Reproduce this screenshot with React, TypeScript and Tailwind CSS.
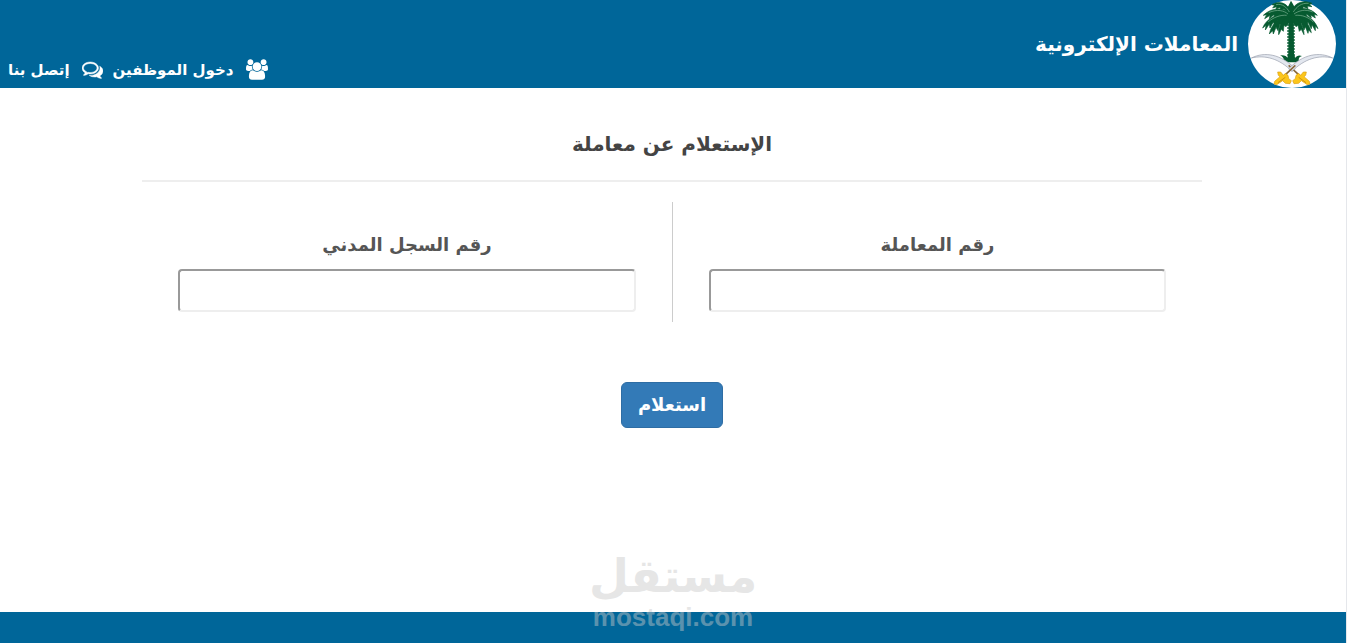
import React, { useState } from 'react';

// Tapered fronds, from the crown outwards
const FRONDS = [
  'M128 34 C116 6 92 2 72 14 L80 16 L74 24 L86 20 L84 28 L96 22 L98 30 L108 26 L128 44 Z',
  'M130 34 C142 4 170 0 192 10 L184 14 L192 20 L178 18 L180 26 L166 20 L164 28 L152 26 L130 44 Z',
  'M128 38 C104 20 68 24 46 46 L56 44 L50 56 L66 46 L64 56 L78 44 L80 52 L94 44 L128 48 Z',
  'M130 38 C156 18 190 24 208 46 L198 43 L202 54 L188 45 L190 54 L176 43 L174 52 L162 44 L130 48 Z',
  'M127 42 C94 38 56 52 44 84 L54 76 L52 90 L64 72 L66 84 L76 66 L80 76 L90 60 L96 64 L128 54 Z',
  'M131 42 C164 36 198 52 210 86 L202 78 L202 92 L192 74 L190 86 L180 66 L176 76 L166 60 L160 64 L130 54 Z',
  'M127 46 C98 48 70 70 64 102 L74 92 L76 102 L84 82 L90 92 L96 72 L104 74 L128 58 Z',
  'M131 46 C162 48 184 68 190 98 L182 90 L180 100 L172 80 L168 90 L160 70 L154 74 L130 58 Z',
  'M126 50 C104 56 90 76 92 104 L100 88 L106 94 L108 76 L114 80 L130 58 Z',
  'M132 50 C152 56 168 76 168 104 L160 88 L154 94 L150 76 L144 80 L128 58 Z',
];

function Emblem() {
  return (
    <svg viewBox="0 0 264 264" className="h-22 w-22 shrink-0" role="img" aria-label="الشعار">
      <circle cx="132" cy="132" r="132" fill="#ffffff" />

      {/* Palm tree */}
      <g fill="#065a30">
        <path d="M122 46 L137 46 L138 160 L142 184 L116 184 L121 160 Z" />
        <path d="M102 187 C112 182 106 170 96 166 C108 164 116 168 119 174 L124 158 L130 174 L137 160 L141 174 C146 168 152 164 162 168 C152 170 148 182 158 187 Z" />
        <path d="M112 58 C110 36 120 20 129 2 C140 20 150 36 146 58 L130 66 Z" />
        {FRONDS.map((d) => (
          <path key={d} d={d} stroke="#065a30" strokeWidth="2" strokeLinejoin="round" />
        ))}
      </g>
      <path d="M129 64 V172" stroke="#065a30" strokeWidth="23" strokeDasharray="4 5" />
      <path
        d="M84 14 C104 10 116 22 124 36 M182 10 C160 8 146 20 136 36 M62 38 C88 26 108 32 120 42 M194 36 C172 26 152 32 138 42 M60 66 C76 52 98 44 116 46 M196 66 C182 52 162 44 142 46"
        fill="none"
        stroke="#7fb596"
        strokeWidth="2"
      />

      {/* Swords */}
      <g id="sword">
        <path
          d="M10 174 C50 154 98 162 142 206 L132 214 C94 176 52 164 10 174 Z"
          fill="#e3e7ef"
          stroke="#979dab"
          strokeWidth="2"
        />
        <path d="M122 196 L158 230" stroke="#8a6a3c" strokeWidth="5" />
        <path
          d="M134 242 L142 236 L144 226 L152 220 L158 226 L166 216 L175 216 L173 226 L168 230 L184 244 L186 252 L178 254 L160 242 L152 250 L138 251 Z"
          fill="#fcc61b"
          stroke="#dba014"
          strokeWidth="2"
          strokeLinejoin="round"
        />
        <path d="M152 232 L174 248" stroke="#b5780f" strokeWidth="2" />
      </g>
      <use href="#sword" transform="matrix(-1 0 0 1 264 0)" />
    </svg>
  );
}

function UsersIcon() {
  return (
    <svg viewBox="0 0 1920 1792" className="h-[21px] w-[22px] shrink-0" fill="currentColor" aria-hidden="true">
      <path d="M593 896q-162 5-265 128h-134q-82 0-138-40.5t-56-118.5q0-353 124-353 6 0 43.5 21t97.5 42.5 119 21.5q67 0 133-23-5 37-5 66 0 139 81 256zm1071 637q0 120-73 189.5t-194 69.5h-874q-121 0-194-69.5t-73-189.5q0-53 3.5-103.5t14-109 26.5-108.5 43-97.5 62-81 85.5-53.5 111.5-20q10 0 43 21.5t73 48 107 48 135 21.5 135-21.5 107-48 73-48 43-21.5q61 0 111.5 20t85.5 53.5 62 81 43 97.5 26.5 108.5 14 109 3.5 103.5zm-1024-1277q0 106-75 181t-181 75-181-75-75-181 75-181 181-75 181 75 75 181zm704 384q0 159-112.5 271.5t-271.5 112.5-271.5-112.5-112.5-271.5 112.5-271.5 271.5-112.5 271.5 112.5 112.5 271.5zm576 225q0 78-56 118.5t-138 40.5h-134q-103-123-265-128 81-117 81-256 0-29-5-66 66 23 133 23 59 0 119-21.5t97.5-42.5 43.5-21q124 0 124 353zm-128-609q0 106-75 181t-181 75-181-75-75-181 75-181 181-75 181 75 75 181z" />
    </svg>
  );
}

function CommentsIcon() {
  return (
    <svg
      viewBox="0 0 1792 1792"
      className="h-[21px] w-[21px] shrink-0"
      fill="currentColor"
      stroke="currentColor"
      strokeWidth="40"
      aria-hidden="true"
    >
      <path d="M704 384q-153 0-286 52t-211.5 141-78.5 191q0 82 53 158t149 132l97 56-35 84q34-20 62-39l44-31 53 10q78 14 153 14 153 0 286-52t211.5-141 78.5-191-78.5-191-211.5-141-286-52zm0-128q191 0 353.5 68.5t256.5 186.5 94 257-94 257-256.5 186.5-353.5 68.5q-86 0-176-16-124 88-278 128-36 9-86 16h-3q-11 0-20.5-8t-11.5-21q-1-3-1-6.5t.5-6.5 2-6l2.5-5 3.5-5.5 4-5 4.5-5 4-4.5q5-6 23-25t26-29.5 22.5-29 25-38.5 20.5-44q-124-72-195-177t-71-224q0-139 94-257t256.5-186.5 353.5-68.5zm822 1169q10 24 20.5 44t25 38.5 22.5 29 26 29.5 23 25q1 1 4 4.5t4.5 5 4 5 3.5 5.5l2.5 5 2 6 .5 6.5-1 6.5q-3 14-13 22t-22 7q-50-7-86-16-154-40-278-128-90 16-176 16-271 0-472-132 58 4 88 4 161 0 309-45t264-129q125-92 192-212t67-254q0-77-23-152 129 71 204 178t75 230q0 120-71 224.5t-195 176.5z" />
    </svg>
  );
}

const FIELDS = [
  { id: 'transaction', label: 'رقم المعاملة' },
  { id: 'civil-id', label: 'رقم السجل المدني' },
];

export default function App() {
  const [values, setValues] = useState<Record<string, string>>({});

  const handleChange = (e: React.ChangeEvent<HTMLInputElement>) => {
    setValues({ ...values, [e.target.id]: e.target.value });
  };

  return (
    <div
      dir="rtl"
      className="relative flex min-h-screen flex-col border-r border-gray-200 bg-white font-['DejaVu_Sans',sans-serif] font-bold text-[#444444]"
    >
      {/* Header */}
      <header className="flex justify-between bg-[#006699] pr-2.5 text-white">
        <div className="flex items-center gap-2.5">
          <Emblem />
          <h1 className="text-xl">المعاملات الإلكترونية</h1>
        </div>
        <nav className="flex items-end gap-2.5 pb-2 pl-2 text-[15px] leading-5">
          <a href="#staff" className="flex items-center gap-3">
            <UsersIcon />
            دخول الموظفين
          </a>
          <a href="#contact" className="flex items-center gap-3">
            <CommentsIcon />
            إتصل بنا
          </a>
        </nav>
      </header>

      {/* Inquiry form */}
      <main className="mx-auto w-full max-w-[1062px] grow pt-[42px] pr-0.5">
        <h2 className="border-b-2 border-[#eeeeee] pb-[22px] text-center text-xl">الإستعلام عن معاملة</h2>
        <form onSubmit={(e) => e.preventDefault()}>
          <div className="mt-5 grid grid-cols-2 divide-x divide-[#cccccc]">
            {FIELDS.map((field) => (
              <div key={field.id} className="px-9 pt-[29px] pb-2.5 text-center">
                <label htmlFor={field.id} className="mb-2.5 block text-lg text-[#555555]">
                  {field.label}
                </label>
                <input
                  id={field.id}
                  type="text"
                  value={values[field.id] ?? ''}
                  onChange={handleChange}
                  className="block h-[43px] w-full rounded-sm border-2 border-t-[#999999] border-r-[#eeeeee] border-b-[#eeeeee] border-l-[#999999] bg-white px-3"
                />
              </div>
            ))}
          </div>
          <div className="mt-15 flex justify-center">
            <button type="submit" className="rounded-md border border-[#2e6da4] bg-[#337ab7] px-4 py-2 text-lg text-white">
              استعلام
            </button>
          </div>
        </form>
      </main>

      <footer className="h-[31px] bg-[#006699]" />

      {/* Watermark */}
      <div className="pointer-events-none absolute inset-x-0 bottom-3 flex flex-col items-center text-[#c8c8c8] opacity-45">
        <span className="text-[46px] leading-[54px]">مستقل</span>
        <span dir="ltr" className="font-['Liberation_Sans',sans-serif] text-[26px] leading-7">
          mostaqi.com
        </span>
      </div>
    </div>
  );
}
